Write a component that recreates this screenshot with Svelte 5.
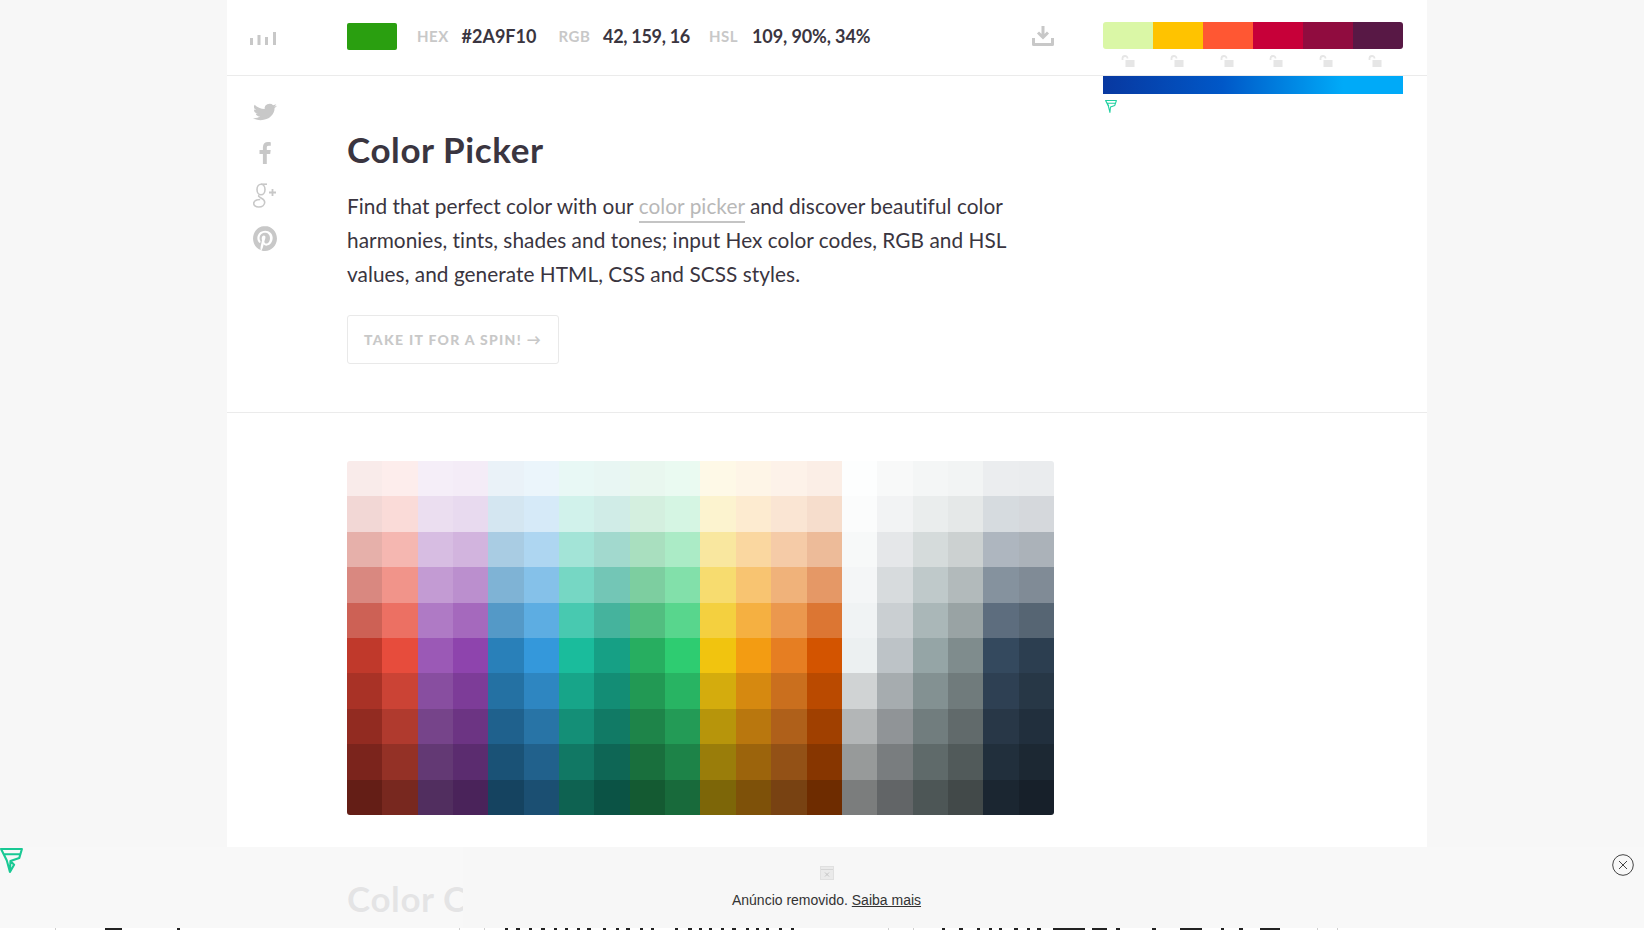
<script>
    const rows = [
        'F9EBEA FDEDEC F5EEF8 F4ECF7 EAF2F8 EBF5FB E8F8F5 E8F6F3 E9F7EF EAFAF1 FEF9E7 FEF5E7 FDF2E9 FBEEE6 FDFEFE F8F9F9 F4F6F6 F2F4F4 EBEDEF EAECEE',
        'F2D7D5 FADBD8 EBDEF0 E8DAEF D4E6F1 D6EAF8 D1F2EB D0ECE7 D4EFDF D5F5E3 FCF3CF FDEBD0 FAE5D3 F6DDCC FBFCFC F2F3F4 EAEDED E5E8E8 D6DBDF D5D8DC',
        'E6B0AA F5B7B1 D7BDE2 D2B4DE A9CCE3 AED6F1 A3E4D7 A2D9CE A9DFBF ABEBC6 F9E79F FAD7A0 F5CBA7 EDBB99 F7F9F9 E5E7E9 D5DBDB CCD1D1 AEB6BF ABB2B9',
        'D98880 F1948A C39BD3 BB8FCE 7FB3D5 85C1E9 76D7C4 73C6B6 7DCEA0 82E0AA F7DC6F F8C471 F0B27A E59866 F4F6F7 D7DBDD BFC9CA B2BABB 85929E 808B96',
        'CD6155 EC7063 AF7AC5 A569BD 5499C7 5DADE2 48C9B0 45B39D 52BE80 58D68D F4D03F F5B041 EB984E DC7633 F0F3F4 CACFD2 AAB7B8 99A3A4 5D6D7E 566573',
        'C0392B E74C3C 9B59B6 8E44AD 2980B9 3498DB 1ABC9C 16A085 27AE60 2ECC71 F1C40F F39C12 E67E22 D35400 ECF0F1 BDC3C7 95A5A6 7F8C8D 34495E 2C3E50',
        'A93226 CB4335 884EA0 7D3C98 2471A3 2E86C1 17A589 138D75 229954 28B463 D4AC0D D68910 CA6F1E BA4A00 D0D3D4 A6ACAF 839192 707B7C 2E4053 273746',
        '922B21 B03A2E 76448A 6C3483 1F618D 2874A6 148F77 117A65 1E8449 239B56 B7950B B9770E AF601A A04000 B3B6B7 909497 717D7E 616A6B 283747 212F3D',
        '7B241C 943126 633974 5B2C6F 1A5276 21618C 117864 0E6655 196F3D 1D8348 9A7D0A 9C640C 935116 873600 979A9A 797D7F 5F6A6A 515A5A 212F3C 1C2833',
        '641E16 78281F 512E5F 4A235A 154360 1B4F72 0E6251 0B5345 145A32 186A3B 7D6608 7E5109 784212 6E2C00 7B7D7D 626567 4D5656 424949 1B2631 17202A'
    ];
    const cells = rows.join(' ').split(' ');
    const scheme = ['#DAF7A6', '#FFC300', '#FF5733', '#C70039', '#900C3F', '#581845'];

    // tops of the text cut off by the bottom of the window: [x, width]
    const cutGlyphs = [
        [105, 17], [177, 3], [505, 3], [516, 4], [529, 3], [541, 4], [554, 3], [565, 3], [577, 3], [587, 4],
        [603, 3], [616, 3], [626, 4], [640, 3], [651, 3], [675, 3], [688, 4], [699, 3], [709, 3], [721, 3],
        [732, 4], [746, 3], [756, 3], [766, 3], [779, 3], [791, 3], [942, 3], [959, 4], [977, 3], [989, 3],
        [999, 3], [1014, 4], [1027, 3], [1037, 4], [1053, 32], [1092, 15], [1116, 4], [1152, 4], [1180, 22],
        [1221, 3], [1239, 4], [1260, 20]
    ];
    const cutLines = [55, 459, 484, 888, 913, 1317, 1337];
</script>

<div class="page">
    <header class="topbar">
        <div class="side">
            <svg class="bars" width="26" height="14" viewBox="0 0 26 14">
                <rect x="0" y="7" width="3" height="7" />
                <rect x="7.5" y="4" width="3" height="10" />
                <rect x="15" y="6" width="3" height="8" />
                <rect x="23" y="1" width="3" height="13" />
            </svg>
        </div>
        <div class="values">
            <span class="swatch"></span>
            <span class="key">HEX</span><span class="val hex">#2A9F10</span>
            <span class="key">RGB</span><span class="val rgb">42, 159, 16</span>
            <span class="key">HSL</span><span class="val hsl">109, 90%, 34%</span>
        </div>
        <svg class="download" width="22" height="20" viewBox="0 0 22 20">
            <path d="M11 0v11M6 6.500l5 5 5-5" fill="none" stroke="#c8c8c8" stroke-width="3" />
            <path d="M1.500 12v6.500h19V12" fill="none" stroke="#c8c8c8" stroke-width="3" stroke-linejoin="round" />
        </svg>
    </header>

    <section class="intro">
        <div class="social">
            <svg class="twitter" width="24" height="20" viewBox="0 0 24 24" preserveAspectRatio="none">
                <path d="M23.953 4.57a10 10 0 01-2.825.775 4.958 4.958 0 002.163-2.723c-.951.555-2.005.959-3.127 1.184a4.92 4.92 0 00-8.384 4.482C7.69 8.095 4.067 6.13 1.64 3.162a4.822 4.822 0 00-.666 2.475c0 1.71.87 3.213 2.188 4.096a4.904 4.904 0 01-2.228-.616v.06a4.923 4.923 0 003.946 4.827 4.996 4.996 0 01-2.212.085 4.936 4.936 0 004.604 3.417 9.867 9.867 0 01-6.102 2.105c-.39 0-.779-.023-1.17-.067a13.995 13.995 0 007.557 2.209c9.053 0 13.998-7.496 13.998-13.985 0-.21 0-.42-.015-.63A9.935 9.935 0 0024 4.59z" />
            </svg>
            <svg class="facebook" width="12" height="22" viewBox="0 0 12 22">
                <path d="M7.8 22V12h3.4l.5-3.9H7.8V5.6c0-1.1.3-1.9 1.9-1.9h2.1V.2C11.4.1 10.2 0 8.9 0 5.9 0 3.9 1.8 3.9 5.2v2.9H.5V12h3.4v10z" />
            </svg>
            <svg class="gplus" width="24" height="25" viewBox="0 0 24 25">
                <g fill="none" stroke="#c8c8c8" stroke-width="1.6">
                    <ellipse cx="8" cy="6.5" rx="4" ry="5.3" />
                    <path d="M6 12.2c-1.2 1.3.8 2 2.5 3 2 1.1 3.2 2 3.2 4 0 2.700-2.400 4.800-6 4.800-3.300 0-5-1.800-5-3.600 0-2 2.200-3.700 6.500-3.900" />
                    <path d="M8 1.200h6" />
                    <path d="M19.500 6v7M16 9.500h7" stroke-width="1.800" />
                </g>
            </svg>
            <svg class="pinterest" width="24" height="25" viewBox="0 0 24 24" preserveAspectRatio="none">
                <path d="M12.017 0C5.396 0 .029 5.367.029 11.987c0 5.079 3.158 9.417 7.618 11.162-.105-.949-.199-2.403.041-3.439.219-.937 1.406-5.957 1.406-5.957s-.359-.72-.359-1.781c0-1.663.967-2.911 2.168-2.911 1.024 0 1.518.769 1.518 1.688 0 1.029-.653 2.567-.992 3.992-.285 1.193.6 2.165 1.775 2.165 2.128 0 3.768-2.245 3.768-5.487 0-2.861-2.063-4.869-5.008-4.869-3.41 0-5.409 2.562-5.409 5.199 0 1.033.394 2.143.889 2.741.099.12.112.225.085.345-.09.375-.293 1.199-.334 1.363-.053.225-.172.271-.401.165-1.495-.69-2.433-2.878-2.433-4.646 0-3.776 2.748-7.252 7.92-7.252 4.158 0 7.392 2.967 7.392 6.923 0 4.135-2.607 7.462-6.233 7.462-1.214 0-2.354-.629-2.758-1.379l-.749 2.848c-.269 1.045-1.004 2.352-1.498 3.146 1.123.345 2.306.535 3.55.535 6.607 0 11.985-5.365 11.985-11.987C23.97 5.39 18.592.026 11.985.026L12.017 0z" />
            </svg>
        </div>
        <div class="copy">
            <h1>Color Picker</h1>
            <p>Find that perfect color with our <a href="#picker">color picker</a> and discover beautiful color harmonies, tints, shades and tones; input Hex color codes, RGB and HSL values, and generate HTML, CSS and SCSS styles.</p>
            <span class="spin">TAKE IT FOR A SPIN! →</span>
        </div>
    </section>

    <section class="chart">
        <div class="palette">
            {#each cells as c}
                <span style={`background:#${c}`}></span>
            {/each}
        </div>
        <h2>Color Chart</h2>
    </section>

    <aside class="scheme">
        <div class="strip">
            {#each scheme as c}
                <span style={`background:${c}`}></span>
            {/each}
        </div>
        <div class="locks">
            {#each scheme as c}
                <svg width="14" height="12" viewBox="0 0 14 12">
                    <path d="M1.500 5V3.500a2.500 2.500 0 0 1 5 0" fill="none" stroke="#e6e6e6" stroke-width="1.800" />
                    <rect x="4.500" y="5" width="9" height="7" fill="#e6e6e6" />
                </svg>
            {/each}
        </div>
        <div class="banner"></div>
        <svg class="mini-funnel" width="12" height="13" viewBox="0 0 22 24">
            <path d="M1 1h20l-3 9-8 3-1 10-3-12zM1 1l6 10M4 6h15" fill="none" stroke="#1fd0a0" stroke-width="2" stroke-linejoin="round" />
        </svg>
    </aside>
</div>

<div class="adbar">
    <div class="adbox">
        <svg width="14" height="14" viewBox="0 0 14 14">
            <rect x="0.500" y="0.500" width="13" height="13" fill="#eaeaea" stroke="#e0e0e0" />
            <path d="M1 3.500h12" stroke="#d6d6d6" />
            <path d="M5 6.500l4 4M9 6.500l-4 4" stroke="#c4c4c4" />
        </svg>
        <p>Anúncio removido. <a href="#saiba">Saiba mais</a></p>
    </div>
</div>

<svg class="funnel" width="23" height="25" viewBox="0 0 22 24">
    <path d="M1 1h20l-2.500 8.500L10 12.500 9.500 23 6.500 12zM1 1l5.500 11M4 6h15M10 12.500l3.500 3.500L9.500 23" fill="none" stroke="#19c994" stroke-width="2" stroke-linejoin="round" />
</svg>

<svg class="close" width="22" height="22" viewBox="0 0 22 22">
    <circle cx="11" cy="11" r="10.300" fill="none" stroke="#444" />
    <path d="M7 7l8 8M15 7l-8 8" stroke="#444" />
</svg>

<svg class="cut" width="1644" height="2" viewBox="0 0 1644 2">
    {#each cutLines as x}
        <rect {x} y="0" width="1" height="2" fill="#cfcfcf" />
    {/each}
    {#each cutGlyphs as g}
        <rect x={g[0]} y="0" width={g[1]} height="2" fill="#222" />
    {/each}
</svg>

<style>
    :global(html), :global(body) {
        margin: 0;
        height: 930px;
        overflow: hidden;
        background: #f7f7f7;
    }

    .page {
        position: relative;
        width: 1200px;
        height: 930px;
        margin-left: 227px;
        background: #fff;
        overflow: hidden;
        font-family: Lato, "Liberation Sans", sans-serif;
        color: #3a3540;
    }

    .topbar {
        display: flex;
        align-items: center;
        height: 75px;
        border-bottom: 1px solid #ebebeb;
        box-sizing: content-box;
    }

    .side {
        width: 120px;
        padding-left: 23px;
        box-sizing: border-box;
    }

    .bars {
        display: block;
        margin-top: 1px;
        fill: #c8c8c8;
    }

    .values {
        display: flex;
        align-items: center;
        width: 685px;
        margin-top: -3px;
    }

    .swatch {
        width: 50px;
        height: 27px;
        margin-right: 20px;
        border-radius: 2px;
        background: #2a9f10;
    }

    .key {
        width: 44.5px;
        font-size: 15px;
        font-weight: 700;
        letter-spacing: 0.5px;
        color: #c8c8c8;
    }

    .val {
        font-size: 18px;
        font-weight: 700;
        white-space: nowrap;
    }

    .hex {
        width: 97px;
    }

    .rgb {
        width: 106px;
        letter-spacing: -0.3px;
    }

    .hsl {
        margin-left: -1.5px;
        letter-spacing: -0.1px;
    }

    .download {
        margin-top: -3px;
    }

    .intro {
        display: flex;
        height: 336px;
        border-bottom: 1px solid #ebebeb;
    }

    .social {
        display: flex;
        flex-direction: column;
        align-items: center;
        gap: 20px;
        width: 50px;
        margin-left: 13px;
        margin-right: 57px;
        padding-top: 26px;
        fill: #c8c8c8;
    }

    .gplus {
        margin-top: -1px;
    }

    .pinterest {
        margin-top: -2px;
    }

    .copy {
        width: 680px;
    }

    h1 {
        margin: 53px 0 0;
        font-size: 35px;
        line-height: 40px;
        font-weight: 700;
        letter-spacing: 0.6px;
    }

    p {
        margin: 20px 0 0;
        font-size: 20.8px;
        line-height: 34px;
        letter-spacing: 0.05px;
    }

    .copy a {
        color: #b8b8b8;
        text-decoration: none;
        border-bottom: 2px solid #c4c4c4;
        padding-bottom: 3px;
    }

    .spin {
        display: inline-block;
        margin-top: 24px;
        padding: 0 16px;
        height: 47px;
        line-height: 47px;
        border: 1px solid #e9e9e9;
        border-radius: 3px;
        font-size: 14px;
        font-weight: 900;
        letter-spacing: 1.3px;
        color: #c8c8c8;
    }

    .chart {
        padding: 48px 0 0 120px;
    }

    .palette {
        display: grid;
        grid-template-columns: repeat(20, 1fr);
        grid-template-rows: repeat(10, 1fr);
        width: 707px;
        height: 354px;
        border-radius: 3px;
        overflow: hidden;
    }

    h2 {
        margin: 63px 0 0;
        font-size: 35px;
        line-height: 40px;
        font-weight: 700;
        letter-spacing: 0.6px;
    }

    .scheme {
        position: absolute;
        top: 22px;
        left: 876px;
        width: 300px;
    }

    .strip {
        display: flex;
        height: 27px;
        border-radius: 3px;
        overflow: hidden;
    }

    .strip span {
        flex: 1;
    }

    .locks {
        display: flex;
        justify-content: space-around;
        height: 27px;
        padding: 6px 3px 0 0;
        box-sizing: border-box;
    }

    .banner {
        height: 18px;
        background: linear-gradient(90deg, #0838a0, #0058c8 40%, #00aaf8 80%);
    }

    .mini-funnel {
        display: block;
        margin: 6px 0 0 2px;
    }

    .adbar {
        position: fixed;
        top: 847px;
        left: 0;
        width: 100%;
        height: 81px;
        background: rgba(247, 247, 247, 0.9);
        display: flex;
        justify-content: center;
    }

    .adbox {
        display: flex;
        flex-direction: column;
        align-items: center;
        width: 727px;
        margin-left: 9px;
        padding-top: 19px;
        box-sizing: border-box;
        background: #f7f7f7;
        font-family: "Liberation Sans", Arial, sans-serif;
        color: #333;
    }

    .adbox p {
        margin: 11px 0 0;
        font-size: 14px;
        line-height: 18px;
        letter-spacing: 0;
    }

    .adbox a {
        color: #333;
    }

    .funnel {
        position: fixed;
        top: 848px;
        left: 0;
    }

    .close {
        position: fixed;
        top: 854px;
        left: 1612px;
    }

    .cut {
        position: fixed;
        top: 928px;
        left: 0;
        background: #fff;
    }
</style>
